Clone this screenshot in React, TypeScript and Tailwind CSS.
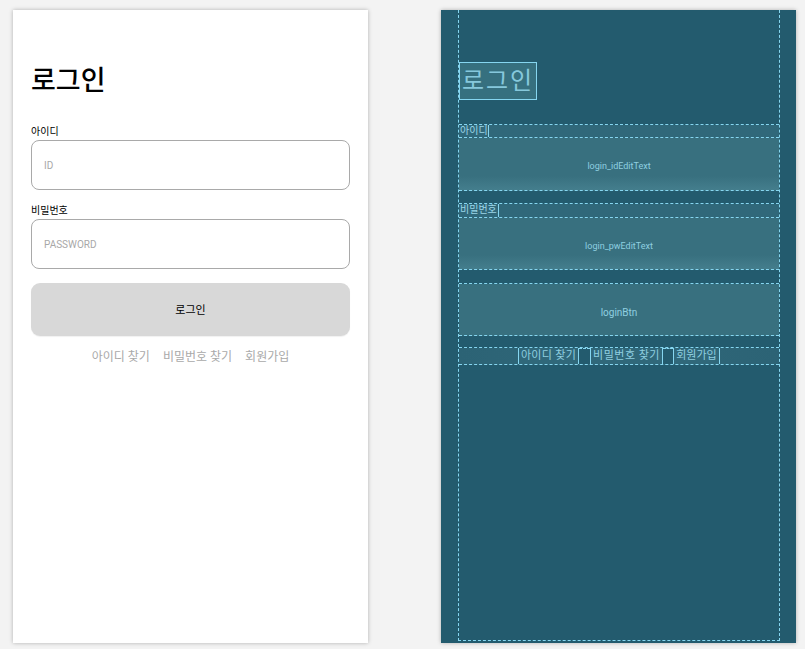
import React from "react";

const font = { fontFamily: "Roboto, 'Noto Sans CJK KR', sans-serif" };

function LeftPanel() {
  return (
    <div className="w-[355px] h-[633px] bg-white shadow-[0_0_4px_rgba(0,0,0,0.28)] px-[18px] flex flex-col">
      <div className="mt-[52px] h-[38px] leading-[38px] text-[27px] font-medium text-black whitespace-nowrap">로그인</div>
      <div className="mt-[25px] h-[13px] leading-[13px] text-[10px] text-black">아이디</div>
      <div className="h-[53px] pt-[2px]">
        <div className="h-[50px] rounded-[8px] border-[1.5px] border-[#a9a9a9] flex items-center pl-[12px] text-[10px] text-[#a8a8a8]">ID</div>
      </div>
      <div className="h-[13px]" />
      <div className="h-[14px] leading-[14px] text-[10px] text-black">비밀번호</div>
      <div className="h-[52px] pt-[1px]">
        <div className="h-[50px] rounded-[8px] border-[1.5px] border-[#a9a9a9] flex items-center pl-[12px] text-[10px] text-[#a8a8a8]">PASSWORD</div>
      </div>
      <div className="h-[13px]" />
      <div className="h-[53px] rounded-[9px] bg-[#d8d8d8] shadow-[0_1px_1px_rgba(0,0,0,0.06)] flex items-center justify-center pt-[3px] text-[11px] text-black">로그인</div>
      <div className="h-[12px]" />
      <div className="h-[17px] flex items-center justify-center gap-[13px] text-[12px] text-[#a9a9a9] whitespace-nowrap">
        <span>아이디 찾기</span>
        <span>비밀번호 찾기</span>
        <span>회원가입</span>
      </div>
    </div>
  );
}

function BpEdit({ label, h }: { label: string; h: string }) {
  return (
    <div className={`${h} relative border-b border-dashed border-[#86d6f0] bg-[#38707f] flex items-center justify-center pt-[6px]`}>
      <div className="absolute left-0 right-0 bottom-0 h-[14px] bg-gradient-to-b from-[#38707f] to-[#447e8d]" />
      <span className="relative text-[9px] text-[#8fcfe0]">{label}</span>
    </div>
  );
}

function BpLabel({ text, w, h }: { text: string; w: string; h: string }) {
  return (
    <div className={`${h} border-b border-dashed border-[#86d6f0] bg-[#30687a] flex`}>
      <div className={`${w} h-full border-r border-[#86d6f0] text-[10px] leading-[12px] text-[#9ad6e8] pl-[1px] whitespace-nowrap overflow-hidden`}>{text}</div>
    </div>
  );
}

function Spacer({ h }: { h: string }) {
  return <div className={`${h} border-b border-dashed border-[#86d6f0]`} />;
}

function LinkBox({ text, w, track }: { text: string; w: string; track: string }) {
  return (
    <div className={`${w} shrink-0 border-x border-[#86d6f0] bg-[#30687a] ${track} whitespace-nowrap overflow-hidden flex justify-center`}>
      {text}
    </div>
  );
}

function Gap({ w }: { w: string }) {
  return <div className={`${w} shrink-0 bg-[#235b6e] border-t border-dashed border-[#86d6f0]`} />;
}

function RightPanel() {
  return (
    <div className="w-[355px] h-[633px] bg-[#235b6e] shadow-[0_0_4px_rgba(0,0,0,0.28)] pl-[17px] pr-[16px] pb-[2px]">
      <div className="h-full border-x border-b border-dashed border-[#86d6f0] flex flex-col">
        <div className="h-[115px] border-b border-dashed border-[#86d6f0] pt-[52px]">
          <div className="w-[78px] h-[38px] border border-[#86d6f0] bg-[#36707f] flex items-center justify-center text-[24px] tracking-[2px] text-[#86c8dc] whitespace-nowrap overflow-hidden">로그인</div>
        </div>
        <BpLabel text="아이디" w="w-[30px]" h="h-[13px]" />
        <BpEdit label="login_idEditText" h="h-[53px]" />
        <Spacer h="h-[13px]" />
        <BpLabel text="비밀번호" w="w-[40px]" h="h-[14px]" />
        <BpEdit label="login_pwEditText" h="h-[52px]" />
        <Spacer h="h-[14px]" />
        <div className="h-[52px] border-b border-dashed border-[#86d6f0] bg-[#38707f] flex items-center justify-center pt-[6px] text-[10px] text-[#8fcfe0]">loginBtn</div>
        <Spacer h="h-[12px]" />
        <div className="h-[17px] border-b border-dashed border-[#86d6f0] flex bg-gradient-to-r from-[#2c6375] via-[#30687a] to-[#2c6375] text-[11px] leading-[15px] text-[#8fcfe0]">
          <div className="w-[59px] shrink-0" />
          <LinkBox text="아이디 찾기" w="w-[61px]" track="tracking-[0.3px]" />
          <Gap w="w-[11px]" />
          <LinkBox text="비밀번호 찾기" w="w-[73px]" track="tracking-[0.5px]" />
          <Gap w="w-[10px]" />
          <LinkBox text="회원가입" w="w-[47px]" track="tracking-[0px]" />
          <div className="flex-1" />
        </div>
        <div className="flex-1" />
      </div>
    </div>
  );
}

export default function App() {
  return (
    <div className="w-[805px] h-[649px] bg-[#f3f3f3] overflow-hidden" style={font}>
      <div className="flex pt-[10px] pl-[13px] gap-[73px]">
        <LeftPanel />
        <RightPanel />
      </div>
    </div>
  );
}
